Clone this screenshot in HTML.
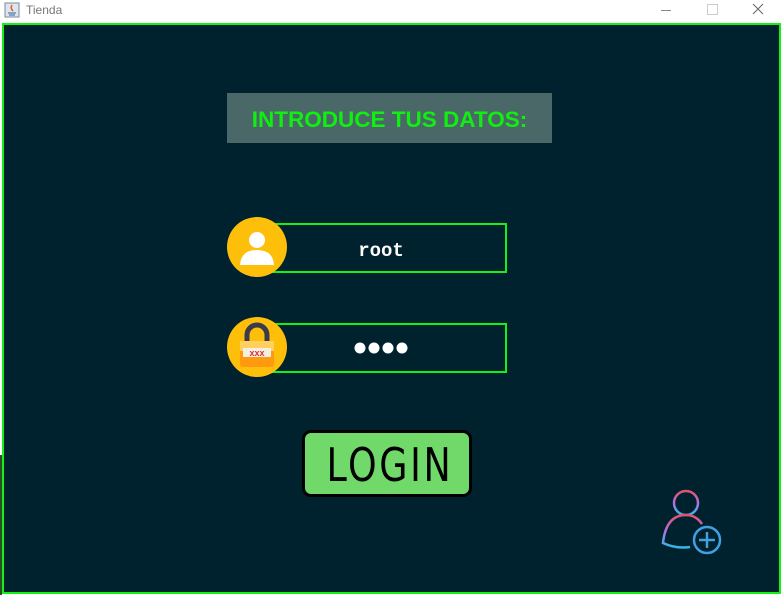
<!DOCTYPE html>
<html><head><style>
body{margin:0;width:781px;height:595px;background:#fff;position:relative;overflow:hidden;font-family:"Liberation Sans",sans-serif}
.abs{position:absolute}
</style></head><body>
<div class="abs" style="left:0;top:0;width:781px;height:23px;background:#fff"></div>
<svg class="abs" style="left:4px;top:2px" width="16" height="16"><rect x="1" y="1" width="14" height="14" fill="#dde6ee" stroke="#7a8a9a"/><path d="M8 3 q-2 3 1 6" stroke="#e06020" fill="none" stroke-width="1.5"/><path d="M4 11 h8 M5 13 h6" stroke="#3060a0"/></svg>
<div class="abs" style="left:26px;top:3px;font-size:12px;color:#777">Tienda</div>
<div class="abs" style="left:661px;top:10px;width:10px;height:1px;background:#888"></div>
<div class="abs" style="left:707px;top:4px;width:9px;height:9px;border:1px solid #ccc"></div>
<svg class="abs" style="left:752px;top:3px" width="12" height="12"><path d="M1 1L11 11M11 1L1 11" stroke="#666"/></svg>
<div class="abs" style="left:2px;top:23px;width:775px;height:567px;border:2px solid #15f015;background:#00212e"></div>
<div class="abs" style="left:0;top:455px;width:2px;height:140px;background:#2a4a2a"></div>
<div class="abs" style="left:227px;top:93px;width:325px;height:50px;background:#4a6868;color:#10f010;font-weight:bold;font-size:22.5px;line-height:54px;text-align:center">INTRODUCE TUS DATOS:</div>
<div class="abs" style="left:267px;top:223px;width:236px;height:46px;border:2px solid #15f015;color:#fff;font-family:'Liberation Mono',monospace;font-weight:bold;font-size:19px;line-height:52px;text-align:center;text-indent:-12px">root</div>
<div class="abs" style="left:267px;top:323px;width:236px;height:46px;border:2px solid #15f015"></div>
<svg class="abs" style="left:353px;top:341px" width="56" height="14"><circle cx="7" cy="7" r="5.5" fill="#fff"/><circle cx="21" cy="7" r="5.5" fill="#fff"/><circle cx="35" cy="7" r="5.5" fill="#fff"/><circle cx="49" cy="7" r="5.5" fill="#fff"/></svg>
<svg class="abs" style="left:227px;top:217px" width="60" height="60"><circle cx="30" cy="30" r="30" fill="#fdbf0a"/><circle cx="30" cy="23" r="8" fill="#fff"/><path d="M13 48 Q14 33 30 33 Q46 33 47 48 Z" fill="#fff"/></svg>
<svg class="abs" style="left:227px;top:317px" width="60" height="60"><circle cx="30" cy="30" r="30" fill="#fdbf0a"/><path d="M20 26 V18 a10 10 0 0 1 20 0 V26" stroke="#3a3a4a" stroke-width="5" fill="none"/><rect x="13" y="24" width="34" height="26" rx="3" fill="#ff9a10"/><rect x="13" y="24" width="34" height="10" fill="#ffd060"/><rect x="16" y="31" width="28" height="9" fill="#f4f0e0"/><text x="30" y="39" font-size="9" font-weight="bold" fill="#e03040" text-anchor="middle" font-family="Liberation Sans">xxx</text></svg>
<div class="abs" style="left:302px;top:430px;width:164px;height:61px;background:#70d96a;border:3px solid #000;border-radius:9px;text-align:center;font-family:'DejaVu Sans Condensed','DejaVu Sans',sans-serif;font-size:46px;line-height:64px;color:#000;letter-spacing:3px;text-indent:3px"><span style="display:inline-block;transform:scaleX(0.88)">LOGIN</span></div>
<svg class="abs" style="left:658px;top:488px" width="68" height="70">
<defs><linearGradient id="g" x1="0" y1="0" x2="0" y2="1"><stop offset="0" stop-color="#e8506a"/><stop offset=".5" stop-color="#b070e0"/><stop offset="1" stop-color="#30b8e8"/></linearGradient></defs>
<circle cx="28" cy="15" r="12" fill="none" stroke="url(#g)" stroke-width="2.5"/>
<path d="M44 36 Q38 27 28 27 Q8 27 5 55 Q18 61 32 59" fill="none" stroke="url(#g)" stroke-width="2.5"/>
<circle cx="49" cy="52" r="13" fill="none" stroke="#40a0e0" stroke-width="2.5"/>
<path d="M49 44V60M41 52H57" stroke="#40a0e0" stroke-width="2.5"/>
</svg>
</body></html>
